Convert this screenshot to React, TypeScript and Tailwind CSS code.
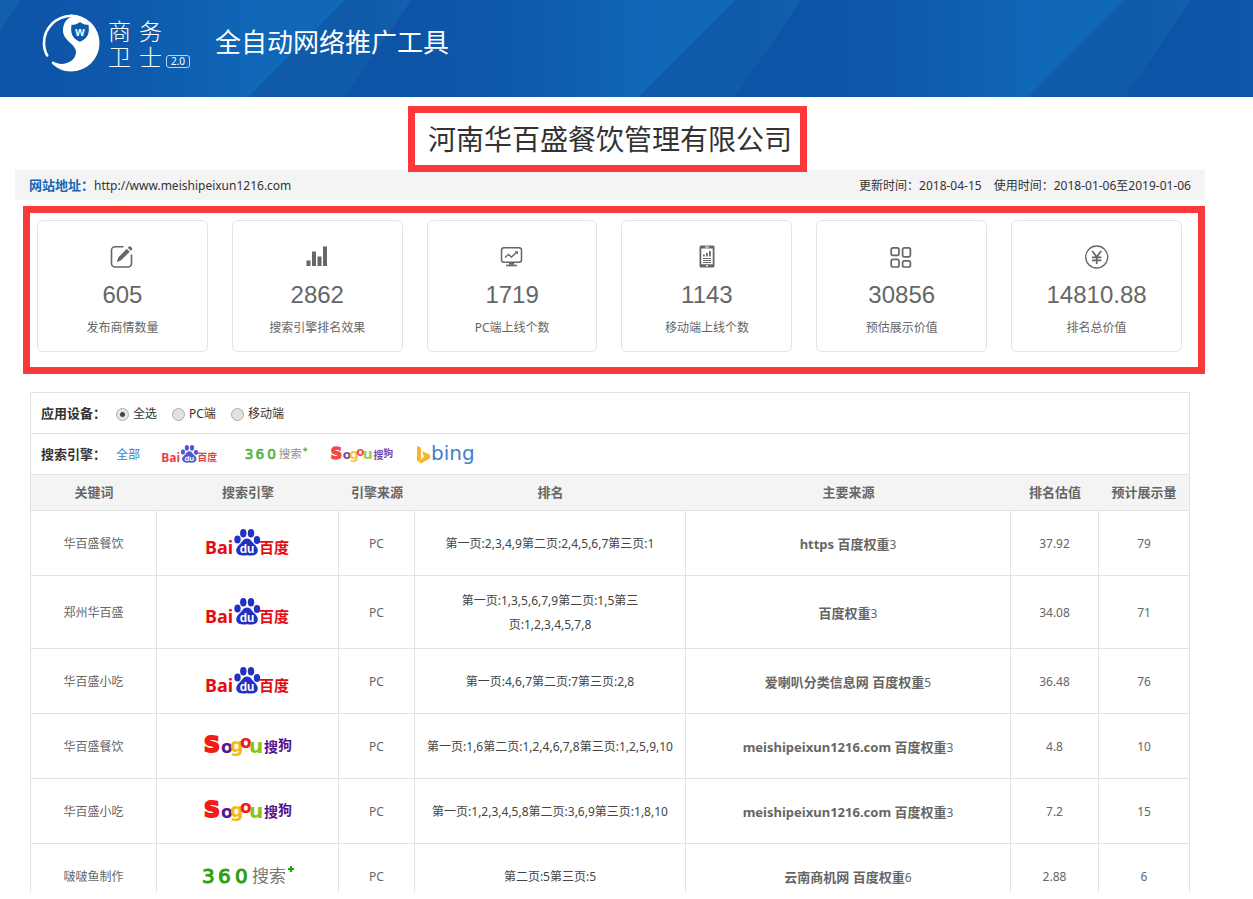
import { useState } from "react";
import type { ReactNode } from "react";

type Engine = "baidu" | "sogou" | "so360";

interface IStat {
  value: string;
  label: string;
  icon: ReactNode;
}

interface IRankRow {
  keyword: string;
  engine: Engine;
  source: string;
  rank: string;
  site: string;
  weight: number;
  value: string;
  views: number;
}

const rows: IRankRow[] = [
  {
    keyword: "华百盛餐饮",
    engine: "baidu",
    source: "PC",
    rank: "第一页:2,3,4,9第二页:2,4,5,6,7第三页:1",
    site: "https 百度权重",
    weight: 3,
    value: "37.92",
    views: 79,
  },
  {
    keyword: "郑州华百盛",
    engine: "baidu",
    source: "PC",
    rank: "第一页:1,3,5,6,7,9第二页:1,5第三页:1,2,3,4,5,7,8",
    site: "百度权重",
    weight: 3,
    value: "34.08",
    views: 71,
  },
  {
    keyword: "华百盛小吃",
    engine: "baidu",
    source: "PC",
    rank: "第一页:4,6,7第二页:7第三页:2,8",
    site: "爱喇叭分类信息网 百度权重",
    weight: 5,
    value: "36.48",
    views: 76,
  },
  {
    keyword: "华百盛餐饮",
    engine: "sogou",
    source: "PC",
    rank: "第一页:1,6第二页:1,2,4,6,7,8第三页:1,2,5,9,10",
    site: "meishipeixun1216.com 百度权重",
    weight: 3,
    value: "4.8",
    views: 10,
  },
  {
    keyword: "华百盛小吃",
    engine: "sogou",
    source: "PC",
    rank: "第一页:1,2,3,4,5,8第二页:3,6,9第三页:1,8,10",
    site: "meishipeixun1216.com 百度权重",
    weight: 3,
    value: "7.2",
    views: 15,
  },
  {
    keyword: "啵啵鱼制作",
    engine: "so360",
    source: "PC",
    rank: "第二页:5第三页:5",
    site: "云南商机网 百度权重",
    weight: 6,
    value: "2.88",
    views: 6,
  },
];

const devices = ["全选", "PC端", "移动端"];

function EditIcon() {
  return (
    <svg viewBox="0 0 24 24" className="size-6" fill="none">
      <path
        d="M13.500 1.800H5A3.500 3.500 0 0 0 1.500 5.300v13.200A3.500 3.500 0 0 0 5 22h13a3.500 3.500 0 0 0 3.500-3.500V9.500"
        stroke="#666"
        strokeWidth="1.600"
      />
      <path
        d="M16.800 3.800l2.900 2.900L11.100 15.300l-4.300 2 1.400-4.700zM17.800 2.800l1.300-1.200c.5-.4 1-.4 1.400 0l1.500 1.500c.4.500.4 1 0 1.400l-1.200 1.200z"
        fill="#666"
      />
    </svg>
  );
}

function BarsIcon() {
  return (
    <svg viewBox="0 0 24 24" className="size-6" fill="#666">
      <path d="M1.500 15.500h4V21h-4zM7 6.500h4V21H7zM12.500 11.500h4V21h-4zM18 1.500h4V21h-4z" />
    </svg>
  );
}

function MonitorIcon() {
  return (
    <svg viewBox="0 0 24 24" className="size-6" fill="none" stroke="#666">
      <rect x="1.500" y="2.800" width="20" height="14.500" rx="2.500" strokeWidth="1.500" />
      <path d="M5 12.500l3.500-3 3 2.500L17 7" strokeWidth="1.400" />
      <path d="M15 6.700h2.500v2.500" strokeWidth="1" />
      <path d="M6 20.500h11" strokeWidth="1.600" />
      <path d="M9 18.700h5" strokeWidth="2.200" />
    </svg>
  );
}

function PhoneIcon() {
  return (
    <svg viewBox="0 0 24 24" className="size-6" fill="#666">
      <path
        fillRule="evenodd"
        d="M6 .5h12A1.500 1.500 0 0 1 19.500 2v19a1.500 1.500 0 0 1-1.500 1.500H6A1.500 1.500 0 0 1 4.500 21V2A1.500 1.500 0 0 1 6 .5zM6.300 3.500v15.700h11.400V3.500zM10 1.600v.8h4v-.8zM11 20.300v1.200h2v-1.200z"
      />
      <path d="M8 9.500h1.800v2H8zM11 8h1.800v3.500H11zM14 6h1.800v5.500H14zM8 13h8v1H8zM8 15h8v1H8zM8 17h8v1H8z" />
    </svg>
  );
}

function GridIcon() {
  return (
    <svg
      viewBox="0 0 24 24"
      className="size-6"
      fill="none"
      stroke="#666"
      strokeWidth="1.700"
    >
      <rect x="1.200" y="2.800" width="7.800" height="7.600" rx="1.800" />
      <rect x="12.600" y="2.800" width="7.800" height="9" rx="1.800" />
      <rect x="1.200" y="14.400" width="7.800" height="7.600" rx="1.800" />
      <rect x="12.600" y="15.800" width="7.800" height="6.200" rx="1.800" />
    </svg>
  );
}

function YuanIcon() {
  return (
    <svg viewBox="0 0 24 24" className="size-6" fill="none" stroke="#666">
      <circle cx="11.700" cy="12" r="11" strokeWidth="1.300" />
      <path
        d="M7.200 6l4.500 6 4.500-6M7 12.300h9.400M7 15.300h9.400M11.700 12v7"
        strokeWidth="1.700"
      />
    </svg>
  );
}

const stats: IStat[] = [
  { value: "605", label: "发布商情数量", icon: <EditIcon /> },
  { value: "2862", label: "搜索引擎排名效果", icon: <BarsIcon /> },
  { value: "1719", label: "PC端上线个数", icon: <MonitorIcon /> },
  { value: "1143", label: "移动端上线个数", icon: <PhoneIcon /> },
  { value: "30856", label: "预估展示价值", icon: <GridIcon /> },
  { value: "14810.88", label: "排名总价值", icon: <YuanIcon /> },
];

function BaiduLogo({ className }: { className?: string }) {
  return (
    <svg
      viewBox="0 0 84 30"
      className={className}
      role="img"
      aria-label="百度"
      fontWeight="700"
      overflow="visible"
    >
      <g fill="#e60b12">
        <text x="-1" y="25" fontSize="18" fontFamily="Noto Sans">
          Bai
        </text>
        <text x="53" y="24" fontSize="15" fontFamily="Noto Sans CJK SC">
          百度
        </text>
      </g>
      <g fill="#2330c4">
        <ellipse cx="31.500" cy="10.500" rx="3.200" ry="4" />
        <ellipse cx="37.300" cy="4.300" rx="3.200" ry="4.200" />
        <ellipse cx="45" cy="4.300" rx="3.200" ry="4.200" />
        <ellipse cx="51" cy="11" rx="3.200" ry="4" />
        <path d="M41 9.500c3.500 0 4.500 3 7 5.500 3 2.800 4.500 5 3.500 8-1.200 3.500-5 3.800-10.500 3.300-5.500.5-9.300.2-10.500-3.300-1-3 .5-5.200 3.500-8 2.500-2.500 3.500-5.500 7-5.500z" />
      </g>
      <text
        x="41"
        y="24"
        fontSize="12"
        fill="#fff"
        textAnchor="middle"
        fontFamily="Liberation Sans"
      >
        du
      </text>
    </svg>
  );
}

function SogouLogo({ className }: { className?: string }) {
  return (
    <svg
      viewBox="0 0 90 26"
      className={className}
      role="img"
      aria-label="搜狗"
      fontWeight="700"
      fontFamily="DejaVu Sans"
      overflow="visible"
    >
      <text>
        <tspan
          x="1"
          y="18"
          fontSize="22"
          fill="#f01c16"
          stroke="#f01c16"
          strokeWidth="2"
        >
          S
        </tspan>
        <tspan x="18" y="19" fontSize="17" fill="#5a1590">
          o
        </tspan>
        <tspan x="27" y="18" fontSize="19" fill="#f6b913">
          g
        </tspan>
        <tspan x="37" y="14" fontSize="17" fill="#f01c16">
          o
        </tspan>
        <tspan x="46" y="19" fontSize="20" fill="#8cc220">
          u
        </tspan>
      </text>
      <text fill="#56148c" fontSize="14" fontFamily="Noto Sans CJK SC">
        <tspan x="61" y="18">
          搜
        </tspan>
        <tspan x="75" y="16">
          狗
        </tspan>
      </text>
    </svg>
  );
}

function So360Logo({ className }: { className?: string }) {
  return (
    <svg
      viewBox="0 0 94 26"
      className={className}
      role="img"
      aria-label="360搜索"
      overflow="visible"
    >
      <text
        x="1 17 34"
        y="19"
        fontSize="20"
        fill="#2ba010"
        stroke="#2ba010"
        strokeWidth="1"
        fontFamily="DejaVu Sans"
      >
        360
      </text>
      <text
        x="51"
        y="18"
        fontSize="17"
        fill="#777"
        fontFamily="Noto Sans CJK SC"
      >
        搜索
      </text>
      <path d="M90 2v6M87 5h6" stroke="#2ba010" strokeWidth="2.200" />
    </svg>
  );
}

function BingLogo({ className }: { className?: string }) {
  return (
    <svg viewBox="0 0 64 26" className={className} role="img" aria-label="bing">
      <path
        d="M1 4l4 1.500v11.200l-2.500 2.800L1 18.500zM6 9l8 3.800v3.400L5 21.500l-2.500-2 5.500-4.500z"
        fill="#f6b52c"
      />
      <text
        x="15"
        y="18"
        fontSize="20"
        fill="#3f7fd0"
        fontFamily="DejaVu Sans"
      >
        bing
      </text>
    </svg>
  );
}

function EngineLogo({ engine }: { engine: Engine }) {
  if (engine === "baidu") return <BaiduLogo className="h-[30px] w-[84px]" />;
  if (engine === "sogou") return <SogouLogo className="h-[26px] w-[90px]" />;
  return <So360Logo className="h-[26px] w-[94px]" />;
}

function HeaderBackground() {
  return (
    <svg className="absolute inset-0 size-full" aria-hidden="true">
      <defs>
        <linearGradient id="base">
          <stop offset="0" stopColor="#0d54a7" />
          <stop offset="0.200" stopColor="#0e57aa" />
          <stop offset="0.620" stopColor="#1067b8" />
          <stop offset="1" stopColor="#1067b8" />
        </linearGradient>
        <linearGradient id="band">
          <stop offset="0" stopColor="#0f5ba9" />
          <stop offset="0.700" stopColor="#0f5ba9" />
          <stop offset="1" stopColor="#1260af" />
        </linearGradient>
        <pattern
          id="stripes"
          x="21"
          width="390"
          height="97"
          patternUnits="userSpaceOnUse"
        >
          <rect width="390" height="97" fill="url(#base)" />
          <path d="M324 0L227 97h96L390 0z" fill="url(#band)" />
          <path d="M390 0l-67 97h67z" fill="#0d54a7" />
        </pattern>
      </defs>
      <rect width="100%" height="100%" fill="url(#stripes)" />
    </svg>
  );
}

function BrandMark() {
  return (
    <svg viewBox="0 0 58 58" className="size-[58px]">
      <path
        d="M29 .5a28.500 28.500 0 0 1 0 57c-8 0-14.500-3.200-19.500-8.500 1-1.500 1.500-1.700 2.500-1.200 8 5.200 22 .2 22-9.800 0-8-13-11-13-21.500C21 9 25 4.500 29 3z"
        fill="#fff"
      />
      <path
        d="M29 1.800C14 2.500 2 14 2 29c0 4.500 1 9 3.200 12.500"
        fill="none"
        stroke="#fff"
        strokeWidth="2.600"
        strokeLinecap="round"
      />
      <path
        d="M38 8c2.500 2 5 2.800 8.500 2.800C47.500 18 47 24 38 27.800 29 24 28.500 18 29.500 10.800 33 10.800 35.500 10 38 8z"
        fill="#0f58aa"
      />
      <text
        x="38"
        y="22"
        fontSize="12"
        fontWeight="700"
        fill="#fff"
        textAnchor="middle"
        fontFamily="Liberation Sans"
      >
        w
      </text>
    </svg>
  );
}

function Header() {
  return (
    <header className="relative h-[97px] shrink-0 overflow-hidden bg-[#0f5aac] text-white">
      <HeaderBackground />
      <div className="relative flex items-start pl-[42px]">
        <div className="mt-[14px]">
          <BrandMark />
        </div>
        <div className="mt-[18px] ml-2 grid grid-cols-2 gap-x-2 text-[23px] leading-[26px] font-light">
          <span>商</span>
          <span>务</span>
          <span>卫</span>
          <span>士</span>
        </div>
        <span className="mt-[55px] ml-1 w-6 rounded-[3px] border border-[#b8d4f0] text-center text-[10px] leading-[11px]">
          2.0
        </span>
        <h1 className="mt-6 ml-[25px] text-[26px] leading-9">
          全自动网络推广工具
        </h1>
      </div>
    </header>
  );
}

function StatCard({ value, label, icon }: IStat) {
  return (
    <div className="flex h-[132px] flex-col items-center rounded-md border border-[#e4e4e8] pt-6 text-[#666]">
      {icon}
      <p className="mt-[14px] font-['Liberation_Sans',sans-serif] text-2xl leading-6">
        {value}
      </p>
      <p className="mt-3 leading-[18px]">{label}</p>
    </div>
  );
}

function Filters() {
  const [device, setDevice] = useState(devices[0]);

  return (
    <>
      <div
        role="radiogroup"
        aria-labelledby="device-label"
        className="flex h-[41px] items-center border-b border-[#e2e2e2] pt-[2px] pl-[10px]"
      >
        <span id="device-label" className="w-[75px] text-[13px] font-bold">
          应用设备：
        </span>
        <div className="flex gap-[15px]">
          {devices.map((name) => (
            <label key={name} className="flex items-center gap-1">
              <input
                type="radio"
                name="device"
                checked={device === name}
                onChange={() => setDevice(name)}
                className="size-[13px] appearance-none rounded-full border border-[#aaa] bg-[#e2e2e2] checked:bg-[radial-gradient(circle,#444_2px,#e6e6e6_3px)]"
              />
              {name}
            </label>
          ))}
        </div>
      </div>
      <div className="flex h-[41px] items-center border-b border-[#e2e2e2] pt-[2px] pl-[10px]">
        <span className="w-[75px] text-[13px] font-bold">搜索引擎：</span>
        <div className="flex items-center gap-[22px]">
          <button type="button" className="text-[#2b84c6]">
            全部
          </button>
          <button type="button" className="pr-1 opacity-80">
            <BaiduLogo className="h-5 w-14" />
          </button>
          <button type="button" className="opacity-80">
            <So360Logo className="h-5 w-16" />
          </button>
          <button type="button" className="opacity-80">
            <SogouLogo className="h-5 w-16" />
          </button>
          <button type="button">
            <BingLogo className="h-[26px] w-16" />
          </button>
        </div>
      </div>
    </>
  );
}

function RankTable() {
  return (
    <table className="w-full table-fixed border-separate border-spacing-0 text-center text-[#666]">
      <thead>
        <tr className="h-9 bg-[#f4f4f4] text-[13px] *:border-b *:border-[#e2e2e2] *:pt-px">
          <th className="w-[126px]">关键词</th>
          <th className="w-[182px]">搜索引擎</th>
          <th className="w-[76px]">引擎来源</th>
          <th className="w-[271px]">排名</th>
          <th>主要来源</th>
          <th className="w-[88px]">排名估值</th>
          <th className="w-[90px]">预计展示量</th>
        </tr>
      </thead>
      <tbody>
        {rows.map((row, index) => (
          <tr
            key={index}
            className="leading-6 *:border-r *:border-b *:border-[#e2e2e2] *:px-2 *:pt-[13px] *:pb-[11px] *:last:border-r-0"
          >
            <td>{row.keyword}</td>
            <td>
              <div className="flex h-10 items-center justify-center">
                <EngineLogo engine={row.engine} />
              </div>
            </td>
            <td>{row.source}</td>
            <td className="text-[#444]">{row.rank}</td>
            <td>
              <b className="text-[13px]">{row.site}</b>
              {row.weight}
            </td>
            <td>{row.value}</td>
            <td>{row.views}</td>
          </tr>
        ))}
      </tbody>
    </table>
  );
}

export default function App() {
  return (
    <div className="flex h-screen flex-col overflow-hidden bg-white pb-[7px] font-['Noto_Sans','Noto_Sans_CJK_SC',sans-serif] text-xs text-[#333]">
      <Header />
      <main className="mr-12 ml-[15px] min-h-0 flex-1 overflow-hidden pt-[9px]">
        <div className="flex justify-center pr-[5px]">
          <h2 className="relative z-10 -mb-[2px] border-[7px] border-[#fb393a] bg-white pr-2 pl-[13px] text-[28px] leading-[52px] text-[#333]">
            河南华百盛餐饮管理有限公司
          </h2>
        </div>
        <div className="flex h-[30px] items-center bg-[#f4f4f4] px-[14px] pt-[2px]">
          <span className="text-[13px] font-bold text-[#1565b3]">
            网站地址：
          </span>
          <span>http://www.meishipeixun1216.com</span>
          <span className="ml-auto">更新时间：2018-04-15</span>
          <span className="ml-3">使用时间：2018-01-06至2019-01-06</span>
        </div>
        <section className="mt-[6px] ml-2 grid grid-cols-6 gap-6 border-[7px] border-[#fb393a] pt-[7px] pr-4 pb-[15px] pl-[7px]">
          {stats.map((stat) => (
            <StatCard key={stat.label} {...stat} />
          ))}
        </section>
        <section className="mx-[15px] mt-[18px] border border-[#e2e2e2]">
          <Filters />
          <RankTable />
        </section>
      </main>
    </div>
  );
}
